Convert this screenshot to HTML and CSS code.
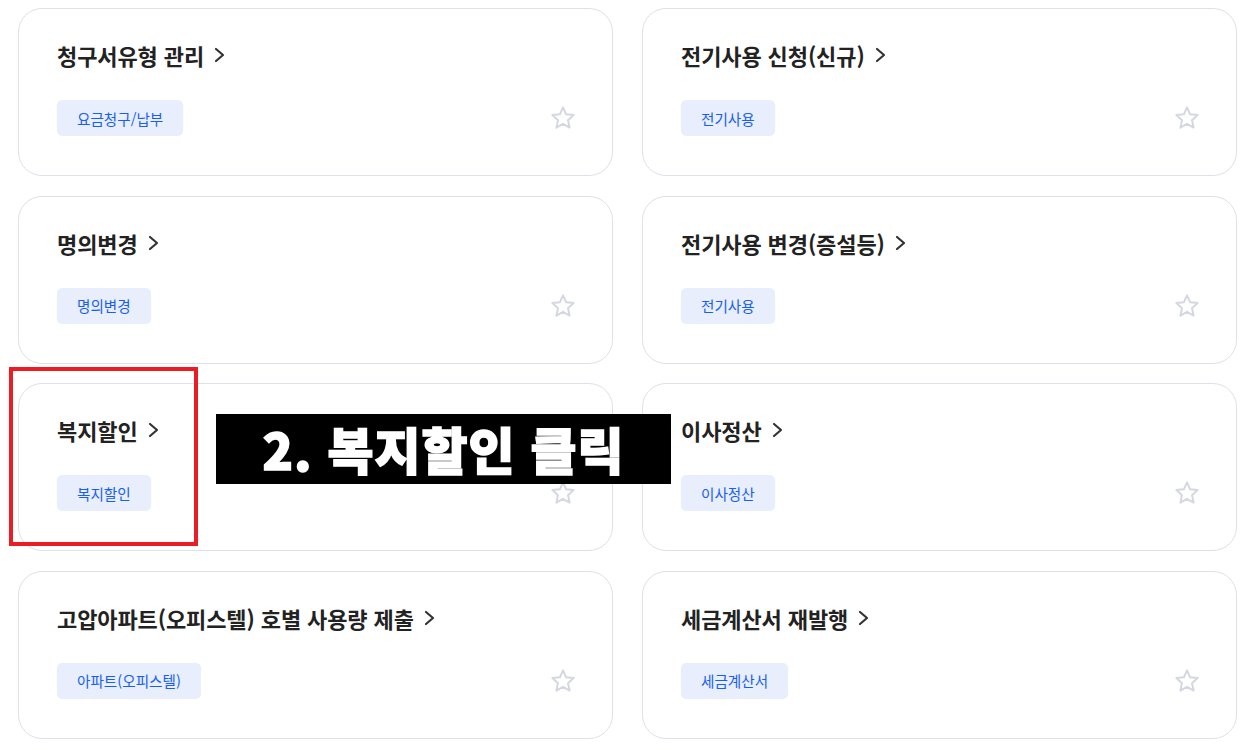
FILE: index.html
```html
<!DOCTYPE html>
<html lang="ko">
<head>
<meta charset="utf-8">
<title>서비스 목록</title>
<link rel="stylesheet" href="styles.css">
</head>
<body>
<div class="page">
  <div class="grid">
    <div class="card">
      <div class="title">청구서유형 관리<svg class="chev" viewBox="0 0 11 16"><path d="M2 2 L9 8 L2 14"/></svg></div>
      <div class="bottom"><span class="tag">요금청구/납부</span><svg class="star" viewBox="0 0 24 24"><path d="M12 2.2 L14.9 8.6 L21.8 9.3 L16.6 14 L18.1 20.9 L12 17.4 L5.9 20.9 L7.4 14 L2.2 9.3 L9.1 8.6 Z"/></svg></div>
    </div>
    <div class="card">
      <div class="title">전기사용 신청(신규)<svg class="chev" viewBox="0 0 11 16"><path d="M2 2 L9 8 L2 14"/></svg></div>
      <div class="bottom"><span class="tag">전기사용</span><svg class="star" viewBox="0 0 24 24"><path d="M12 2.2 L14.9 8.6 L21.8 9.3 L16.6 14 L18.1 20.9 L12 17.4 L5.9 20.9 L7.4 14 L2.2 9.3 L9.1 8.6 Z"/></svg></div>
    </div>
    <div class="card">
      <div class="title">명의변경<svg class="chev" viewBox="0 0 11 16"><path d="M2 2 L9 8 L2 14"/></svg></div>
      <div class="bottom"><span class="tag">명의변경</span><svg class="star" viewBox="0 0 24 24"><path d="M12 2.2 L14.9 8.6 L21.8 9.3 L16.6 14 L18.1 20.9 L12 17.4 L5.9 20.9 L7.4 14 L2.2 9.3 L9.1 8.6 Z"/></svg></div>
    </div>
    <div class="card">
      <div class="title">전기사용 변경(증설등)<svg class="chev" viewBox="0 0 11 16"><path d="M2 2 L9 8 L2 14"/></svg></div>
      <div class="bottom"><span class="tag">전기사용</span><svg class="star" viewBox="0 0 24 24"><path d="M12 2.2 L14.9 8.6 L21.8 9.3 L16.6 14 L18.1 20.9 L12 17.4 L5.9 20.9 L7.4 14 L2.2 9.3 L9.1 8.6 Z"/></svg></div>
    </div>
    <div class="card">
      <div class="title">복지할인<svg class="chev" viewBox="0 0 11 16"><path d="M2 2 L9 8 L2 14"/></svg></div>
      <div class="bottom"><span class="tag">복지할인</span><svg class="star" viewBox="0 0 24 24"><path d="M12 2.2 L14.9 8.6 L21.8 9.3 L16.6 14 L18.1 20.9 L12 17.4 L5.9 20.9 L7.4 14 L2.2 9.3 L9.1 8.6 Z"/></svg></div>
    </div>
    <div class="card">
      <div class="title">이사정산<svg class="chev" viewBox="0 0 11 16"><path d="M2 2 L9 8 L2 14"/></svg></div>
      <div class="bottom"><span class="tag">이사정산</span><svg class="star" viewBox="0 0 24 24"><path d="M12 2.2 L14.9 8.6 L21.8 9.3 L16.6 14 L18.1 20.9 L12 17.4 L5.9 20.9 L7.4 14 L2.2 9.3 L9.1 8.6 Z"/></svg></div>
    </div>
    <div class="card">
      <div class="title">고압아파트(오피스텔) 호별 사용량 제출<svg class="chev" viewBox="0 0 11 16"><path d="M2 2 L9 8 L2 14"/></svg></div>
      <div class="bottom"><span class="tag">아파트(오피스텔)</span><svg class="star" viewBox="0 0 24 24"><path d="M12 2.2 L14.9 8.6 L21.8 9.3 L16.6 14 L18.1 20.9 L12 17.4 L5.9 20.9 L7.4 14 L2.2 9.3 L9.1 8.6 Z"/></svg></div>
    </div>
    <div class="card">
      <div class="title">세금계산서 재발행<svg class="chev" viewBox="0 0 11 16"><path d="M2 2 L9 8 L2 14"/></svg></div>
      <div class="bottom"><span class="tag">세금계산서</span><svg class="star" viewBox="0 0 24 24"><path d="M12 2.2 L14.9 8.6 L21.8 9.3 L16.6 14 L18.1 20.9 L12 17.4 L5.9 20.9 L7.4 14 L2.2 9.3 L9.1 8.6 Z"/></svg></div>
    </div>
  </div>
  <div class="highlight"></div>
  <div class="caption">2. 복지할인 클릭</div>
</div>
</body>
</html>
```
FILE: styles.css
```css
html, body {
  margin: 0;
  padding: 0;
  background: #ffffff;
}
body {
  font-family: "Noto Sans CJK KR", "Noto Sans", sans-serif;
  color: #222222;
}
.page {
  position: relative;
  width: 1252px;
  height: 750px;
  overflow: hidden;
}
.grid {
  display: grid;
  grid-template-columns: 595px 595px;
  grid-auto-rows: 168px;
  column-gap: 29px;
  row-gap: 19.5px;
  padding: 8px 0 0 18px;
}
.card {
  box-sizing: border-box;
  border: 1px solid #dfe1e8;
  border-radius: 24px;
  padding: 30px 36px 0 38px;
  display: flex;
  flex-direction: column;
}
.title {
  font-size: 22px;
  font-weight: 700;
  line-height: 32px;
  color: #222222;
  display: flex;
  align-items: center;
  white-space: nowrap;
  letter-spacing: -0.1px;
}
.chev {
  width: 11px;
  height: 16px;
  margin-left: 10px;
  margin-top: 0;
  fill: none;
  stroke: #333333;
  stroke-width: 2.2;
  stroke-linecap: round;
  stroke-linejoin: round;
}
.bottom {
  margin-top: 29px;
  display: flex;
  justify-content: space-between;
  align-items: center;
}
.tag {
  display: inline-flex;
  align-items: center;
  height: 36px;
  padding: 0 20px;
  border-radius: 5px;
  background: #e8eefb;
  color: #1660f0;
  font-size: 14.6px;
  font-weight: 400;
}
.star {
  width: 26px;
  height: 26px;
  fill: none;
  stroke: #d3d7e0;
  stroke-width: 1.8;
  stroke-linejoin: round;
}
.highlight {
  position: absolute;
  left: 9px;
  top: 367px;
  width: 181px;
  height: 171px;
  border: 4px solid #ec1c24;
}
.caption {
  position: absolute;
  left: 216px;
  top: 414px;
  width: 455px;
  height: 70px;
  background: #000000;
  color: #ffffff;
  font-size: 50px;
  font-weight: 900;
  line-height: 68px;
  text-align: center;
  -webkit-text-stroke: 1.5px #ffffff;
  letter-spacing: 1px;
}
```
